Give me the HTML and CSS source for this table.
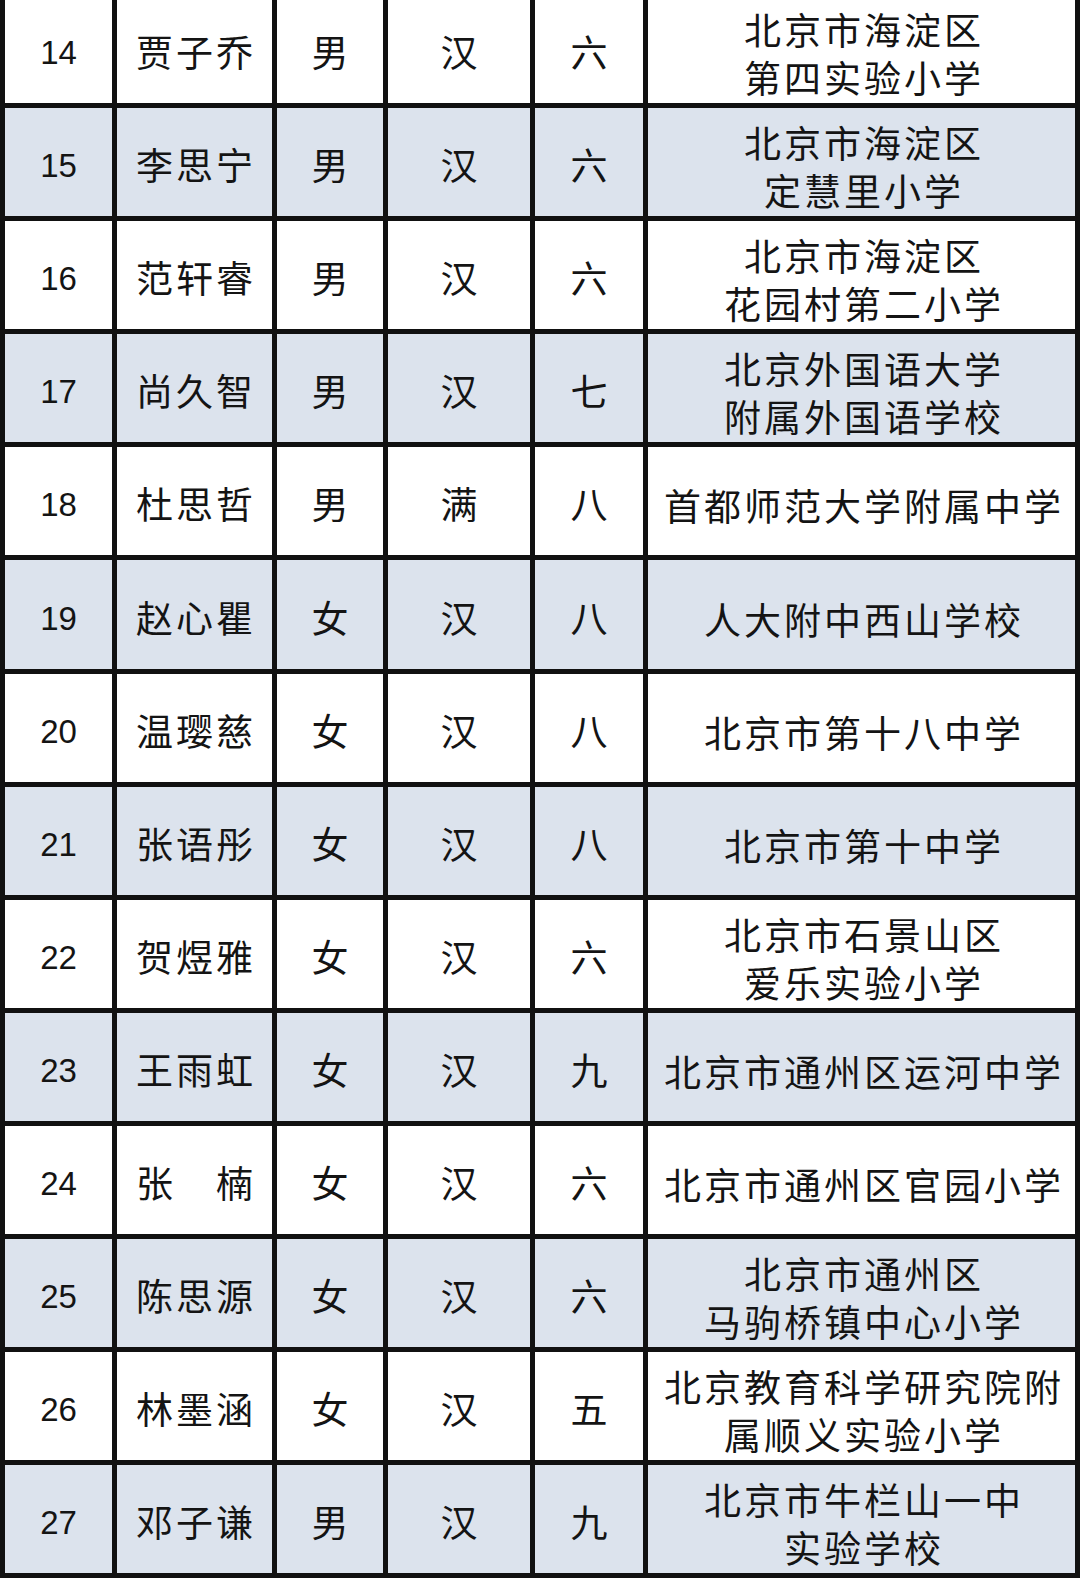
FILE: index.html
```html
<!DOCTYPE html>
<html lang="zh-CN">
<head>
<meta charset="utf-8">
<title>名单</title>
<link rel="stylesheet" href="styles.css">
</head>
<body>
<div class="table">
  <div class="row"><div class="c num">14</div><div class="c">贾子乔</div><div class="c">男</div><div class="c">汉</div><div class="c">六</div><div class="c school">北京市海淀区<br>第四实验小学</div></div>
  <div class="row alt"><div class="c num">15</div><div class="c">李思宁</div><div class="c">男</div><div class="c">汉</div><div class="c">六</div><div class="c school">北京市海淀区<br>定慧里小学</div></div>
  <div class="row"><div class="c num">16</div><div class="c">范轩睿</div><div class="c">男</div><div class="c">汉</div><div class="c">六</div><div class="c school">北京市海淀区<br>花园村第二小学</div></div>
  <div class="row alt"><div class="c num">17</div><div class="c">尚久智</div><div class="c">男</div><div class="c">汉</div><div class="c">七</div><div class="c school">北京外国语大学<br>附属外国语学校</div></div>
  <div class="row"><div class="c num">18</div><div class="c">杜思哲</div><div class="c">男</div><div class="c">满</div><div class="c">八</div><div class="c school">首都师范大学附属中学</div></div>
  <div class="row alt"><div class="c num">19</div><div class="c">赵心瞿</div><div class="c">女</div><div class="c">汉</div><div class="c">八</div><div class="c school">人大附中西山学校</div></div>
  <div class="row"><div class="c num">20</div><div class="c">温璎慈</div><div class="c">女</div><div class="c">汉</div><div class="c">八</div><div class="c school">北京市第十八中学</div></div>
  <div class="row alt"><div class="c num">21</div><div class="c">张语彤</div><div class="c">女</div><div class="c">汉</div><div class="c">八</div><div class="c school">北京市第十中学</div></div>
  <div class="row"><div class="c num">22</div><div class="c">贺煜雅</div><div class="c">女</div><div class="c">汉</div><div class="c">六</div><div class="c school">北京市石景山区<br>爱乐实验小学</div></div>
  <div class="row alt"><div class="c num">23</div><div class="c">王雨虹</div><div class="c">女</div><div class="c">汉</div><div class="c">九</div><div class="c school">北京市通州区运河中学</div></div>
  <div class="row"><div class="c num">24</div><div class="c">张　楠</div><div class="c">女</div><div class="c">汉</div><div class="c">六</div><div class="c school">北京市通州区官园小学</div></div>
  <div class="row alt"><div class="c num">25</div><div class="c">陈思源</div><div class="c">女</div><div class="c">汉</div><div class="c">六</div><div class="c school">北京市通州区<br>马驹桥镇中心小学</div></div>
  <div class="row"><div class="c num">26</div><div class="c">林墨涵</div><div class="c">女</div><div class="c">汉</div><div class="c">五</div><div class="c school">北京教育科学研究院附<br>属顺义实验小学</div></div>
  <div class="row alt"><div class="c num">27</div><div class="c">邓子谦</div><div class="c">男</div><div class="c">汉</div><div class="c">九</div><div class="c school">北京市牛栏山一中<br>实验学校</div></div>
</div>
</body>
</html>
```

FILE: styles.css
```css
html, body {
  margin: 0;
  padding: 0;
  background: #ffffff;
}

body {
  width: 1080px;
  height: 1579px;
  overflow: hidden;
  font-family: "Noto Sans CJK SC", "Noto Sans", sans-serif;
  color: #141414;
}

.table {
  margin-top: -10px;
  display: grid;
  grid-auto-rows: 108.1px;
  row-gap: 5px;
  padding: 5px;
  background: #111111;
}

.row {
  display: grid;
  grid-template-columns: 107px 155px 106px 142px 108px 427px;
  column-gap: 5px;
}

.c {
  background: #ffffff;
  display: flex;
  align-items: center;
  justify-content: center;
  text-align: center;
  font-size: 37px;
  line-height: 48px;
  letter-spacing: 3px;
  padding-left: 3px;
  padding-top: 4px;
  white-space: nowrap;
}

.c.school {
  padding-top: 8px;
  padding-left: 5px;
}

.row.alt .c {
  background: #dce3ed;
}

.c.num {
  font-family: "Liberation Sans", "Noto Sans CJK SC", sans-serif;
  font-size: 33px;
  letter-spacing: 0;
  padding-left: 0;
  padding-top: 8px;
}
```
